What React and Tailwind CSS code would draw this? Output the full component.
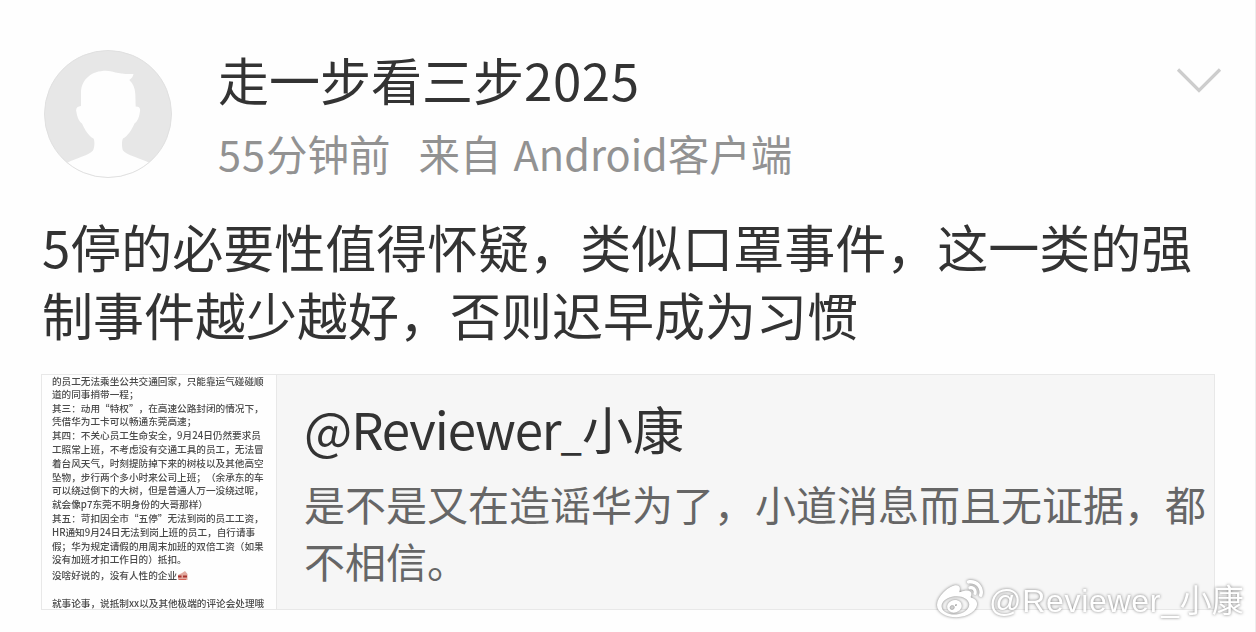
// src/App.jsx
import React from 'react';
import { FaWeibo } from 'react-icons/fa';

// Long post shown as a tiny preview inside the quoted card
const previewLines = [
  '的员工无法乘坐公共交通回家，只能靠运气碰碰顺',
  '道的同事捎带一程；',
  '其三：动用“特权”，在高速公路封闭的情况下，',
  '凭借华为工卡可以畅通东莞高速；',
  '其四：不关心员工生命安全，9月24日仍然要求员',
  '工照常上班，不考虑没有交通工具的员工，无法冒',
  '着台风天气，时刻提防掉下来的树枝以及其他高空',
  '坠物，步行两个多小时来公司上班；（余承东的车',
  '可以绕过倒下的大树，但是普通人万一没绕过呢，',
  '就会像p7东莞不明身份的大哥那样）',
  '其五：苛扣因全市“五停”无法到岗的员工工资，',
  'HR通知9月24日无法到岗上班的员工，自行请事',
  '假；华为规定请假的用周末加班的双倍工资（如果',
  '没有加班才扣工作日的）抵扣。',
];

function Avatar() {
  return (
    <svg className="h-32 w-32 shrink-0" viewBox="0 0 128 128">
      <defs>
        <clipPath id="avatar-clip">
          <circle cx="64" cy="64" r="63.5" />
        </clipPath>
      </defs>
      <circle cx="64" cy="64" r="63.5" fill="#e7e7e7" />
      <path
        clipPath="url(#avatar-clip)"
        fill="#fefefe"
        d="M37 56V43C37 29 48 20.7 62 20.7C69 20.7 73 24.5 89.5 24C89 27 87.500 28.500 85.300 30C89 33.500 91 38 91.300 44L91.700 56.500C95 56.500 96.500 58 96 61C95.500 66 94 71 90.500 73.500C87.500 80 84 86 79 88.500C77.500 91 77.800 98 79 100.500C83 105.500 95 107.500 105.500 113V130H23V113C33 107.500 45 105.500 49 100.500C50.500 98 51 91 49.500 88.500C44.500 86 41 80 38 73.500C34.500 71 33 66 32.200 61C31.800 58 33.500 56.500 37 56Z"
      />
      <circle cx="64" cy="64" r="63.5" fill="none" stroke="#e0e0e0" />
    </svg>
  );
}

function PostHeader() {
  return (
    <header className="flex h-[128px] items-start">
      <Avatar />
      <div className="-mt-1 ml-[46px] flex-1 whitespace-nowrap">
        <h1 className="h-[66px] text-[51px] leading-[66px] text-[#333]">
          走一步看三步<span className="tracking-[0.6px]">2025</span>
        </h1>
        <p className="mt-[10px] flex h-[62px] text-[41.500px] leading-[62px] text-[#929292]">
          <span>
            <span className="tracking-[1px]">55</span>分钟前
          </span>
          <span className="ml-[28px]">
            来自<span className="ml-[12px]">Android</span>客户端
          </span>
        </p>
      </div>
      <svg className="mt-4 mr-[32px] h-7 w-12" viewBox="0 0 48 28" fill="none" stroke="#cdcdcd" strokeWidth="3.200">
        <path d="M3 3.500L24 24.500L45 3.500" />
      </svg>
    </header>
  );
}

function PreviewImage() {
  return (
    <div className="h-full w-[235px] shrink-0 overflow-hidden border-r border-[#e8e8e8] bg-[#fefefe] pl-[10px] text-[9.640px] leading-[13.800px] font-medium whitespace-nowrap text-[#4a4a4a] [text-spacing-trim:space-all]">
      <div className="blur-[0.6px]">
        {previewLines.map((line) => (
          <p key={line} className="first:leading-[12.800px]">{line}</p>
        ))}
        <p className="mt-[2px] flex items-center">
          没啥好说的，没有人性的企业
          <svg className="h-[10px] w-[11px]" viewBox="0 0 11 10">
            <path d="M1 4L5 2L8 0L10.500 3V9H1Z" fill="#e2aaa0" />
            <path d="M1 5.500H4.500M6 5.500H10" stroke="#a83430" strokeWidth="1.800" />
            <path d="M2 8.500H9" stroke="#d7685d" />
          </svg>
        </p>
        <p className="mt-[15px] leading-[10px]">就事论事，说抵制xx以及其他极端的评论会处理哦</p>
      </div>
    </div>
  );
}

function QuotedCard() {
  return (
    <section className="mt-[26px] ml-[-3px] flex h-[236px] w-[1174px] border border-[#e8e8e8] bg-[#f6f6f6]">
      <PreviewImage />
      <div className="ml-[27px] whitespace-nowrap">
        <h2 className="mt-[19px] h-[68px] text-[51px] leading-[68px] text-[#333]">
          <span className="tracking-[-1.100px]">@Reviewer</span>
          <span className="text-[38px] font-medium">_</span>小康
        </h2>
        <p className="mt-[13px] text-[41px] leading-[57px] text-[#666]">
          是不是又在造谣华为了，小道消息而且无证据，都
          <br />
          不相信。
        </p>
      </div>
    </section>
  );
}

function Watermark() {
  return (
    <div className="absolute top-[575px] left-[936px] flex h-12 items-center text-white drop-shadow-[0_0_1.500px_rgba(0,0,0,0.500)]">
      <FaWeibo className="mt-[2px] h-[46px] w-[48px]" />
      <span className="ml-[5px] text-[32px] whitespace-nowrap">
        <span className="font-['Liberation_Sans',sans-serif] tracking-[0.7px]">@Reviewer_</span>小康
      </span>
    </div>
  );
}

function App() {
  return (
    <main className="relative h-[632px] w-[1256px] overflow-hidden border-r border-[#ededed] bg-[#fefefe] pt-[50px] pl-[44px] font-['Noto_Sans_CJK_SC',sans-serif]">
      <PostHeader />
      <p className="mt-[34px] ml-[-2px] text-[51px] leading-[68px] whitespace-nowrap text-[#333]">
        5停的必要性值得怀疑，类似口罩事件，这一类的强
        <br />
        制事件越少越好，否则迟早成为习惯
      </p>
      <QuotedCard />
      <Watermark />
    </main>
  );
}

export default App;
